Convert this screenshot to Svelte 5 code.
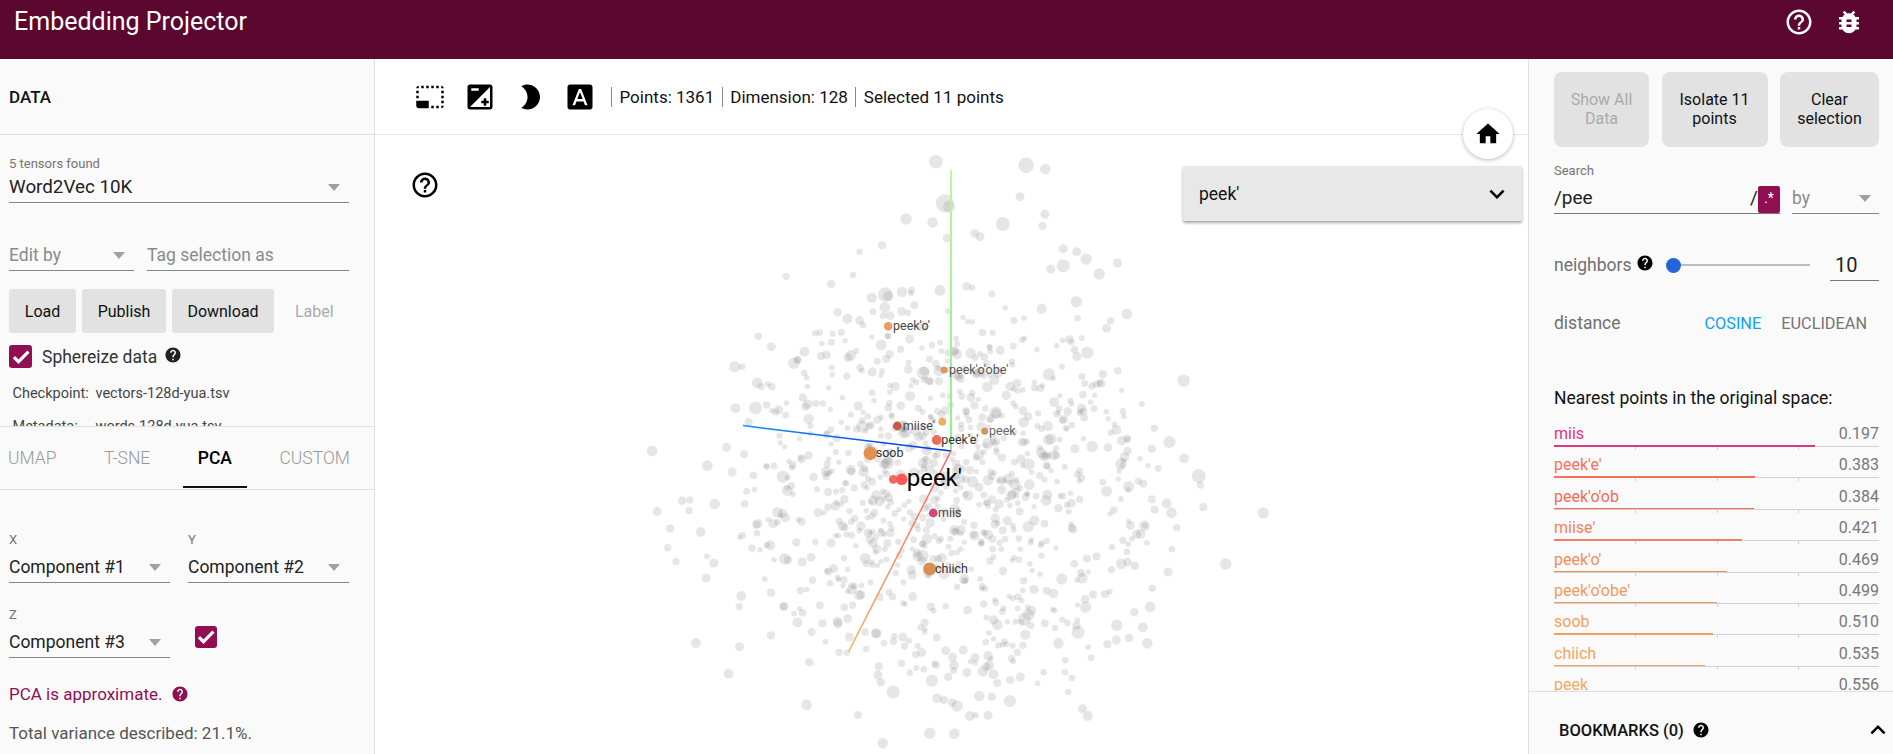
<script>
  const HELP = 'M12 2C6.48 2 2 6.48 2 12s4.48 10 10 10 10-4.48 10-10S17.52 2 12 2zm1 17h-2v-2h2v2zm2.07-7.75l-.9.92C13.45 12.9 13 13.5 13 15h-2v-.5c0-1.1.45-2.1 1.17-2.83l1.24-1.26c.37-.36.59-.86.59-1.41 0-1.1-.9-2-2-2s-2 .9-2 2H8c0-2.21 1.79-4 4-4s4 1.79 4 4c0 .88-.36 1.68-.93 2.25z';
  const HELP_OUTLINE = 'M11 18h2v-2h-2v2zm1-16C6.48 2 2 6.48 2 12s4.48 10 10 10 10-4.48 10-10S17.52 2 12 2zm0 18c-4.41 0-8-3.59-8-8s3.59-8 8-8 8 3.59 8 8-3.59 8-8 8zm0-14c-2.21 0-4 1.79-4 4h2c0-1.1.9-2 2-2s2 .9 2 2c0 2-3 1.75-3 5h2c0-2.25 3-2.5 3-5 0-2.21-1.79-4-4-4z';
  const BUG = 'M20 8h-2.81c-.45-.78-1.07-1.45-1.82-1.96L17 4.41 15.59 3l-2.17 2.17C12.96 5.06 12.49 5 12 5c-.49 0-.96.06-1.41.17L8.41 3 7 4.41l1.62 1.63C7.88 6.55 7.26 7.22 6.81 8H4v2h2.09c-.05.33-.09.66-.09 1v1H4v2h2v1c0 .34.04.67.09 1H4v2h2.81c1.04 1.79 2.97 3 5.19 3s4.15-1.21 5.19-3H20v-2h-2.09c.05-.33.09-.66.09-1v-1h2v-2h-2v-1c0-.34-.04-.67-.09-1H20V8zm-6 8h-4v-2h4v2zm0-4h-4v-2h4v2z';
  const CHECK = 'M9 16.17L4.83 12l-1.42 1.41L9 19 21 7l-1.41-1.41z';

  const TOOLS = [
    'M23 15h-2v2h2v-2zm0-4h-2v2h2v-2zm0 8h-2v2c1 0 2-1 2-2zM15 3h-2v2h2V3zm8 4h-2v2h2V7zm-2-4v2h2c0-1-1-2-2-2zM3 21h8v-6H1v4c0 1.1.9 2 2 2zM3 7H1v2h2V7zm12 12h-2v2h2v-2zm4-16h-2v2h2V3zm0 16h-2v2h2v-2zM3 3C2 3 1 4 1 5h2V3zm0 8H1v2h2v-2zm8-8H9v2h2V3zM7 3H5v2h2V3z',
    'M15 17v2h2v-2h2v-2h-2v-2h-2v2h-2v2h2zm5-15H4c-1.1 0-2 .9-2 2v16c0 1.1.9 2 2 2h16c1.1 0 2-.9 2-2V4c0-1.1-.9-2-2-2zM5 5h6v2H5V5zm15 15H4L20 4v16z',
    'M10 2c-1.82 0-3.53.5-5 1.35C7.99 5.08 10 8.3 10 12s-2.01 6.92-5 8.65C6.47 21.5 8.18 22 10 22c5.52 0 10-4.48 10-10S15.52 2 10 2z',
    'M9.93 13.5h4.14L12 7.98zM20 2H4c-1.1 0-2 .9-2 2v16c0 1.1.9 2 2 2h16c1.1 0 2-.9 2-2V4c0-1.1-.9-2-2-2zm-4.05 16.5l-1.14-3H9.17l-1.12 3H5.96l5.11-13h1.86l5.11 13h-2.09z'
  ];

  const neighbors = [
    { name: 'miis', dist: 0.197, color: '#e0357f' },
    { name: "peek'e'", dist: 0.383, color: '#f4725a' },
    { name: "peek'o'ob", dist: 0.384, color: '#f56a52' },
    { name: "miise'", dist: 0.421, color: '#f47f5f' },
    { name: "peek'o'", dist: 0.469, color: '#f48d58' },
    { name: "peek'o'obe'", dist: 0.499, color: '#f29a5c' },
    { name: 'soob', dist: 0.51, color: '#f0a060' },
    { name: 'chiich', dist: 0.535, color: '#f0a560' },
    { name: 'peek', dist: 0.556, color: '#f0ab60' }
  ];

  // outer points read off the screenshot, [x, y, r] in page pixels
  const top = [
    [725,35,17],[946,46,19],[993,57,13],[931,140,11],[747,160,22],[757,170,15],[652,207,14],[717,217,13],[889,222,17],[992,193,11],[986,228,10],[753,264,11],[820,250,10],[833,260,11],[593,286,10],[538,305,8],[1037,296,11],[1070,305,11],[1093,327,14],[1170,339,11],[1037,347,16],[1006,357,11],[1125,372,14],[358,379,9],[522,375,8],[468,402,10],[601,434,18],[642,426,13],[600,472,13],[484,487,10],[1069,455,14],[1193,492,13],[1072,505,8],[1153,512,9],[1143,535,11],[1096,608,15],[290,559,9],[322,590,11],[403,605,12],[232,650,14],[250,650,8],[377,640,14],[287,698,13],[323,710,9],[1332,692,15],[1002,673,15],[1134,673,10],[1107,708,9],[283,774,16],[234,775,12],[310,765,9],[340,779,11],[405,770,10],[399,743,10],[266,816,10],[212,892,11],[30,903,13],[255,913,10],[1260,835,9],[1193,865,9],[1153,848,8],[1297,876,15],[1254,896,10],[1333,925,12]
  ];
  const bottom = [
    [1369,78,17],[1373,105,9],[1233,101,10],[165,47,13],[226,66,11],[350,80,15],[103,152,10],[122,150,9],[183,162,13],[42,184,11],[120,182,9],[74,236,10],[149,246,12],[68,293,9],[88,335,9],[164,319,7],[181,339,11],[162,384,11],[1527,189,14],[1380,171,10],[1290,160,12],[1302,188,13],[1261,179,10],[1315,233,9],[1236,227,13],[1303,298,8],[1196,282,7],[1435,342,14],[1294,366,11],[1255,415,9],[1250,471,13],[1139,432,10],[1110,434,10],[1211,487,10],[1232,532,12],[1168,526,14],[1243,580,13],[1198,564,10],[1167,570,11],[1145,583,10],[1073,547,16],[1025,580,13],[1105,623,8],[1098,591,7],[1042,631,8],[248,438,12],[243,470,9],[321,428,10],[353,470,10],[386,517,12],[447,520,10],[484,515,12],[420,546,10],[321,556,10],[137,579,12],[244,590,11],[415,637,10],[488,607,9],[507,608,8],[217,671,12],[585,649,10],[583,675,11],[590,697,10],[641,640,9],[661,668,8],[715,692,15],[755,681,10],[620,726,16],[408,764,13],[534,795,10],[728,745,12],[745,750,10],[765,758,10],[777,768,14],[831,738,13],[862,740,10],[906,753,15],[808,798,12],[822,796,8],[853,796,11],[710,850,14],[770,851,13],[595,880,13],[1084,776,11],[1097,798,12],[1049,726,8],[974,700,7],[1058,684,8],[1041,667,8],[989,667,8],[932,681,11],[907,690,10],[875,699,10],[866,673,12],[840,664,13],[801,668,11],[853,618,12],[821,623,11],[910,625,9],[938,586,9],[925,607,9],[878,586,8],[898,582,7],[847,577,8],[792,600,11],[749,602,11],[690,607,11],[766,622,11],[648,588,9],[598,580,8],[644,561,11],[580,550,12],[552,546,9],[513,561,11]
  ];

  // small seeded generator so the cloud looks the same on every load
  function rng(seed) {
    return () => {
      seed = (seed + 0x6d2b79f5) | 0;
      let t = Math.imul(seed ^ (seed >>> 15), 1 | seed);
      t = (t + Math.imul(t ^ (t >>> 7), 61 | t)) ^ t;
      return ((t ^ (t >>> 14)) >>> 0) / 4294967296;
    };
  }

  function makeCloud() {
    const pts = [
      ...top.map(([u, v, r]) => [640 + u / 2.45, 150 + v / 3, r / 2.45]),
      ...bottom.map(([u, v, r]) => [640 + u / 2.45, 450 + v / 3, r / 2.45])
    ];
    const rand = rng(1361);
    const gauss = () => Math.sqrt(-2 * Math.log(rand() + 1e-6)) * Math.cos(2 * Math.PI * rand());
    let n = 0;
    while (n < 860) {
      const x = 945 + gauss() * 115;
      const y = 478 + gauss() * 108;
      const dx = (x - 945) / 215;
      const dy = (y - 480) / 195;
      if (dx * dx + dy * dy > 1) continue;
      pts.push([x, y, 2.6 + rand() * rand() * 4]);
      n++;
    }
    return pts;
  }
  const cloud = makeCloud();

  const selected = [
    { x: 888.2, y: 326.3, r: 4.2, fill: '#ee9a63' },
    { x: 944, y: 370, r: 3.6, fill: '#e2965c' },
    { x: 897.3, y: 426, r: 4.4, fill: '#c85a45' },
    { x: 942.3, y: 421.7, r: 3.9, fill: '#e8b060' },
    { x: 984.7, y: 431.3, r: 3.5, fill: '#c99a55' },
    { x: 936.7, y: 440, r: 4.9, fill: '#ee6c5a' },
    { x: 870.3, y: 453.3, r: 6.7, fill: '#e09050' },
    { x: 893.3, y: 479.3, r: 4.4, fill: '#ee6a60' },
    { x: 901.7, y: 479.3, r: 5.8, fill: '#fb5a5a' },
    { x: 933.3, y: 513, r: 4.4, fill: '#d0487e' },
    { x: 929.7, y: 569, r: 6.5, fill: '#d89050' }
  ];
  const labels = [
    { x: 893, y: 330, t: "peek'o'", fill: '#444' },
    { x: 949, y: 374, t: "peek'o'obe'", fill: '#555' },
    { x: 902.7, y: 430, t: "miise'", fill: '#444' },
    { x: 989, y: 435, t: 'peek', fill: '#666' },
    { x: 941.3, y: 444, t: "peek'e'", fill: '#333' },
    { x: 875.7, y: 457.3, t: 'soob', fill: '#333' },
    { x: 938, y: 516.7, t: 'miis', fill: '#444' },
    { x: 935, y: 572.7, t: 'chiich', fill: '#333' }
  ];
</script>

<div class="page">
  <header class="topbar">
    <span class="title">Embedding Projector</span>
    <div class="top-icons">
      <svg class="icon30" viewBox="0 0 24 24"><path d={HELP_OUTLINE} /></svg>
      <svg class="icon30" viewBox="0 0 24 24"><path d={BUG} /></svg>
    </div>
  </header>

  <main class="body">
    <aside class="left">
      <div class="data-head">DATA</div>
      <div class="data-body">
        <div class="small-label">5 tensors found</div>
        <div class="select word"><span>Word2Vec 10K</span></div>

        <div class="edit-row">
          <div class="select muted edit-by"><span>Edit by</span></div>
          <div class="select muted no-arrow tag"><span>Tag selection as</span></div>
        </div>

        <div class="data-btns">
          <button class="btn load">Load</button>
          <button class="btn publish">Publish</button>
          <button class="btn download">Download</button>
          <span class="label-btn">Label</span>
        </div>

        <div class="sphereize">
          <span class="checkbox">
            <svg viewBox="0 0 24 24"><path d={CHECK} /></svg>
          </span>
          <span>Sphereize data</span>
          <svg class="help" viewBox="0 0 24 24"><path d={HELP} /></svg>
        </div>

        <div class="file first"><span>Checkpoint:</span>vectors-128d-yua.tsv</div>
        <div class="file"><span>Metadata:</span>words-128d-yua.tsv</div>
      </div>

      <nav class="tabs">
        <span class="tab">UMAP</span>
        <span class="tab">T-SNE</span>
        <span class="tab active">PCA</span>
        <span class="tab">CUSTOM</span>
      </nav>

      <div class="pca">
        <div class="pca-row">
          <div class="pca-field">
            <div class="small-label">X</div>
            <div class="select compact"><span>Component #1</span></div>
          </div>
          <div class="pca-field">
            <div class="small-label">Y</div>
            <div class="select compact"><span>Component #2</span></div>
          </div>
        </div>
        <div class="pca-row z-row">
          <div class="pca-field">
            <div class="small-label">Z</div>
            <div class="select compact"><span>Component #3</span></div>
          </div>
          <span class="checkbox z-check">
            <svg viewBox="0 0 24 24"><path d={CHECK} /></svg>
          </span>
        </div>
        <div class="approx">
          PCA is approximate.
          <svg class="help" viewBox="0 0 24 24"><path d={HELP} /></svg>
        </div>
        <div class="variance">Total variance described: 21.1%.</div>
      </div>
    </aside>

    <section class="center">
      <div class="toolbar">
        <div class="tools">
          {#each TOOLS as d}
            <svg class="icon30" viewBox="0 0 24 24"><path {d} /></svg>
          {/each}
        </div>
        <div class="stats">
          <span>Points: 1361</span>
          <span>Dimension: 128</span>
          <span>Selected 11 points</span>
        </div>
      </div>

      <div class="canvas">
        <svg class="scatter" viewBox="375 135 1153 619">
          <defs>
            <linearGradient id="axis-x" gradientUnits="userSpaceOnUse" x1="951" y1="451" x2="848.6" y2="651.7">
              <stop offset="0" stop-color="#ff5f5f" />
              <stop offset="1" stop-color="#ffb060" />
            </linearGradient>
            <linearGradient id="axis-y" gradientUnits="userSpaceOnUse" x1="951" y1="451" x2="951" y2="170">
              <stop offset="0" stop-color="#88f488" />
              <stop offset="1" stop-color="#bdf5a0" />
            </linearGradient>
            <linearGradient id="axis-z" gradientUnits="userSpaceOnUse" x1="951" y1="451" x2="743" y2="426">
              <stop offset="0" stop-color="#0030e0" />
              <stop offset="1" stop-color="#0c90ff" />
            </linearGradient>
          </defs>
          {#each cloud as [x, y, r]}
            <circle class="pt" cx={x} cy={y} {r} />
          {/each}
          <line x1="951" y1="451" x2="951" y2="170" stroke="url(#axis-y)" stroke-width="2" />
          <line x1="951" y1="451" x2="743" y2="425.6" stroke="url(#axis-z)" stroke-width="1.5" />
          <line x1="951" y1="451" x2="848.6" y2="651.7" stroke="url(#axis-x)" stroke-width="1.5" />
          {#each selected as p}
            <circle cx={p.x} cy={p.y} r={p.r} fill={p.fill} />
          {/each}
          {#each labels as l}
            <text class="pt-label" x={l.x} y={l.y} fill={l.fill}>{l.t}</text>
          {/each}
          <text class="pt-main" x="906.7" y="486">peek'</text>
        </svg>

        <svg class="canvas-help icon30" viewBox="0 0 24 24"><path d={HELP_OUTLINE} /></svg>

        <div class="point-select">
          <span>peek'</span>
          <svg class="chev" viewBox="0 0 24 24"><path d="M16.59 8.59L12 13.17 7.41 8.59 6 10l6 6 6-6z" /></svg>
        </div>
      </div>

      <button class="home" aria-label="Reset view">
        <svg viewBox="0 0 24 24"><path d="M10 20v-6h4v6h5v-8h3L12 3 2 12h3v8z" /></svg>
      </button>
    </section>

    <aside class="right">
      <div class="inspector">
        <div class="right-btns">
          <button class="btn big show-all" disabled>Show All<br />Data</button>
          <button class="btn big isolate">Isolate 11<br />points</button>
          <button class="btn big clear">Clear<br />selection</button>
        </div>

        <div class="small-label search-label">Search</div>
        <div class="search-row">
          <div class="search-input">
            <span>/pee</span>
            <span class="slash">/</span>
            <span class="regex">.*</span>
          </div>
          <div class="select muted by"><span>by</span></div>
        </div>

        <div class="nn-row">
          <span class="grey">neighbors</span>
          <svg class="help dark" viewBox="0 0 24 24"><path d={HELP} /></svg>
          <div class="slider"><span class="thumb"></span></div>
          <div class="nn-value">10</div>
        </div>

        <div class="dist-row">
          <span class="grey">distance</span>
          <span class="metric on">COSINE</span>
          <span class="metric">EUCLIDEAN</span>
        </div>

        <div class="nearest-title">Nearest points in the original space:</div>
        <ul class="nearest">
          {#each neighbors as n}
            <li>
              <div class="nn-text">
                <span style:color={n.color}>{n.name}</span>
                <span class="dist">{n.dist.toFixed(3)}</span>
              </div>
              <div class="bar">
                <i class="fill" style:width="{(1 - n.dist) * 100}%" style:background={n.color}></i>
                <i class="tick t1"></i><i class="tick t2"></i><i class="tick t3"></i>
              </div>
            </li>
          {/each}
        </ul>
      </div>

      <div class="bookmarks">
        <span>BOOKMARKS (0)</span>
        <svg class="help dark" viewBox="0 0 24 24"><path d={HELP} /></svg>
        <svg class="less" viewBox="0 0 24 24"><path d="M12 8l-6 6 1.41 1.41L12 10.83l4.59 4.58L18 14z" /></svg>
      </div>
    </aside>
  </main>
</div>

<style>
  :global(body) {
    margin: 0;
    font-family: Roboto, "Liberation Sans", sans-serif;
    background: #fff;
  }

  .page {
    width: 1893px;
    height: 754px;
    display: flex;
    flex-direction: column;
    overflow: hidden;
    color: #111;
  }

  svg { display: block; }
  .icon30 { width: 30px; height: 30px; flex: none; }

  .topbar {
    flex: none;
    height: 59px;
    box-sizing: border-box;
    display: flex;
    justify-content: space-between;
    align-items: flex-start;
    padding: 7px 29px 0 14px;
    background: #5b0730;
    color: #fff;
  }
  .title { font-size: 25px; line-height: 30px; }
  .top-icons { display: flex; gap: 20px; }
  .top-icons svg { fill: #fff; }

  .body { flex: 1; display: flex; min-height: 0; }

  /* left panel */
  .left {
    flex: none;
    width: 375px;
    box-sizing: border-box;
    background: #fafafa;
    border-right: 1px solid #e0e0e0;
    display: flex;
    flex-direction: column;
  }
  .data-head {
    flex: none;
    height: 76px;
    box-sizing: border-box;
    padding-left: 9px;
    display: flex;
    align-items: center;
    border-bottom: 1px solid #e0e0e0;
    font-size: 17px;
    font-weight: 500;
    color: #111;
  }
  .data-body {
    height: 291px;
    flex: none;
    box-sizing: border-box;
    padding: 21px 25px 0 9px;
    overflow: hidden;
  }
  .small-label { font-size: 13px; line-height: 16px; color: #757575; }

  .select {
    position: relative;
    height: 31px;
    box-sizing: border-box;
    border-bottom: 1px solid #858585;
    font-size: 17.5px;
    line-height: 30px;
    color: #222;
  }
  .select.word { font-size: 18.8px; }
  .select::after {
    content: "";
    position: absolute;
    right: 9px;
    top: 12px;
    border-left: 6px solid transparent;
    border-right: 6px solid transparent;
    border-top: 7px solid #a0a0a0;
  }
  .select.no-arrow::after { display: none; }
  .select.muted { color: #8a8a8a; }

  .edit-row { display: flex; gap: 13px; margin-top: 37px; }
  .edit-by { width: 125px; }
  .tag { flex: 1; }

  .data-btns { display: flex; align-items: center; gap: 6px; margin-top: 18px; }
  .btn {
    border: 0;
    border-radius: 3px;
    background: #e2e2e2;
    color: #111;
    font: inherit;
    font-size: 16px;
    padding: 0;
  }
  .load { width: 67px; height: 44px; }
  .publish { width: 84px; height: 44px; }
  .download { width: 102px; height: 44px; }
  .label-btn { margin-left: 15px; font-size: 16px; color: #aaa; }

  .sphereize {
    display: flex;
    align-items: center;
    margin-top: 12px;
    height: 23px;
    font-size: 17.5px;
    color: #333;
  }
  .checkbox {
    flex: none;
    width: 23px;
    height: 23px;
    margin-right: 10px;
    border-radius: 3px;
    background: #8f0f52;
    display: flex;
    align-items: center;
    justify-content: center;
  }
  .checkbox svg { width: 20px; height: 20px; fill: #fff; stroke: #fff; stroke-width: 1.8; }
  .help { width: 18px; height: 18px; fill: #222; flex: none; }
  .sphereize .help { margin-left: 7px; margin-top: -3px; }

  .file { font-size: 14.5px; line-height: 18px; color: #444; padding-left: 3.5px; display: flex; }
  .file span { width: 83px; flex: none; }
  .file.first { margin-top: 17px; }
  .file + .file { margin-top: 15px; }

  .tabs {
    flex: none;
    height: 64px;
    box-sizing: border-box;
    display: flex;
    align-items: center;
    gap: 47.5px;
    padding-left: 8px;
    border-top: 1px solid #e0e0e0;
    border-bottom: 1px solid #e0e0e0;
    font-size: 17.5px;
    color: #999;
    overflow: hidden;
  }
  .tab { position: relative; font-weight: 300; }
  .tab.active { color: #000; font-weight: 500; }
  .tab.active::after {
    content: "";
    position: absolute;
    left: -15px;
    right: -15px;
    bottom: -20px;
    height: 2px;
    background: #111;
  }

  .pca { padding: 42px 25px 0 9px; }
  .pca-row { display: flex; gap: 18px; }
  .pca-field { width: 161px; }
  .compact { height: 35px; line-height: 38px; }
  .compact::after { top: 16px; }
  .z-row { margin-top: 24px; }
  .z-check { margin: 19px 0 0 7px; width: 22px; height: 22px; }
  .approx {
    display: flex;
    align-items: center;
    gap: 9px;
    margin-top: 25px;
    height: 22px;
    font-size: 17px;
    color: #8f0f52;
  }
  .approx .help { fill: #8f0f52; }
  .variance { margin-top: 17px; font-size: 17px; line-height: 22px; color: #555; white-space: nowrap; }

  /* center */
  .center { flex: 1; min-width: 0; position: relative; display: flex; flex-direction: column; background: #fff; }
  .toolbar {
    flex: none;
    height: 76px;
    box-sizing: border-box;
    padding-left: 40px;
    display: flex;
    align-items: center;
    border-bottom: 1px solid #e6e6e6;
  }
  .tools { display: flex; gap: 20px; }
  .stats { display: flex; margin-left: 16px; font-size: 17px; color: #111; }
  .stats span {
    border-left: 1px solid #888;
    padding: 0 7.5px;
    line-height: 20px;
  }
  .canvas { flex: 1; position: relative; overflow: hidden; }
  .scatter { position: absolute; inset: 0; width: 100%; height: 100%; }
  .pt { fill: #8c8c8c; opacity: 0.22; }
  .pt-label { font-size: 12.5px; font-family: Roboto, sans-serif; }
  .pt-main { font-size: 24px; font-family: Roboto, sans-serif; fill: #000; }
  .canvas-help { position: absolute; left: 35px; top: 35px; }

  .point-select {
    position: absolute;
    left: 808px;
    top: 31px;
    width: 339px;
    height: 55px;
    box-sizing: border-box;
    padding: 0 10px 0 16px;
    display: flex;
    align-items: center;
    justify-content: space-between;
    background: #e8e8e8;
    border-radius: 2px;
    box-shadow: 0 2px 3px rgba(0, 0, 0, 0.35);
    font-size: 17.5px;
  }
  .chev { width: 30px; height: 30px; }
  .home {
    position: absolute;
    left: 1088px;
    top: 50px;
    width: 50px;
    height: 50px;
    padding: 0;
    border: 0;
    border-radius: 50%;
    background: #fff;
    box-shadow: 0 1px 4px rgba(0, 0, 0, 0.28);
    display: flex;
    align-items: center;
    justify-content: center;
  }
  .home svg { width: 28px; height: 28px; }

  /* right */
  .right {
    flex: none;
    width: 365px;
    box-sizing: border-box;
    background: #fafafa;
    border-left: 1px solid #e0e0e0;
    display: flex;
    flex-direction: column;
  }
  .inspector { height: 632px; flex: none; overflow: hidden; box-sizing: border-box; padding: 13px 14px 0 25px; }
  .right-btns { display: flex; justify-content: space-between; }
  .big { height: 75px; border-radius: 8px; line-height: 19px; padding-bottom: 1px; }
  .show-all { width: 95px; color: #aaa; }
  .isolate { width: 106px; }
  .clear { width: 99px; }

  .search-label { margin-top: 16px; }
  .search-row { display: flex; gap: 12px; }
  .search-input {
    position: relative;
    width: 226px;
    height: 35px;
    box-sizing: border-box;
    border-bottom: 1px solid #777;
    font-size: 19px;
    line-height: 38px;
    color: #222;
  }
  .slash { position: absolute; left: 196px; top: 0; }
  .regex {
    position: absolute;
    right: 0;
    bottom: 0;
    width: 22px;
    height: 27px;
    background: #8f0f52;
    border-radius: 2px;
    color: #fff;
    font-size: 14px;
    line-height: 24px;
    text-align: center;
  }
  .by { flex: 1; height: 35px; line-height: 38px; }
  .by::after { top: 16px; right: 8px; }

  .grey { color: #707070; font-size: 17.5px; }
  .nn-row { display: flex; align-items: center; height: 32px; margin-top: 35px; }
  .nn-row .help { margin: -4px 0 0 5px; }
  .help.dark { fill: #000; }
  .slider { position: relative; width: 137px; height: 2px; margin-left: 19px; background: #bdbdbd; }
  .thumb {
    position: absolute;
    left: -7.5px;
    top: -6.5px;
    width: 15px;
    height: 15px;
    border-radius: 50%;
    background: #2266d9;
  }
  .nn-value {
    margin-left: 20px;
    width: 49px;
    height: 31px;
    box-sizing: border-box;
    padding-left: 5px;
    border-bottom: 1px solid #777;
    font-size: 20px;
    line-height: 30px;
    color: #222;
  }
  .dist-row { display: flex; align-items: center; margin-top: 31px; height: 22px; }
  .metric { font-size: 16.3px; color: #757575; margin-left: 20px; }
  .metric.on { color: #0da0f5; margin-left: auto; }
  .metric:last-child { margin-right: 12px; }

  .nearest-title { margin-top: 53px; font-size: 17.5px; line-height: 22px; color: #111; }
  .nearest { list-style: none; margin: 15px 0 0; padding: 0; }
  .nearest li { height: 31.4px; box-sizing: border-box; }
  .nn-text { display: flex; justify-content: space-between; font-size: 16px; line-height: 20px; height: 22px; }
  .dist { color: #777; }
  .bar { position: relative; height: 1px; background: #d2d2d2; }
  .bar .fill { position: absolute; left: 0; top: -1px; height: 1.5px; }
  .tick { position: absolute; top: 1px; width: 1px; height: 3px; background: #d2d2d2; }
  .t1 { left: 25%; }
  .t2 { left: 50%; }
  .t3 { left: 75%; }

  .bookmarks {
    flex: 1;
    border-top: 1px solid #e0e0e0;
    display: flex;
    align-items: center;
    padding: 14px 0 0 30px;
    font-size: 16.5px;
    font-weight: 500;
    color: #111;
  }
  .bookmarks .help { margin-left: 8px; }
  .less { width: 30px; height: 30px; margin-left: auto; }
</style>
